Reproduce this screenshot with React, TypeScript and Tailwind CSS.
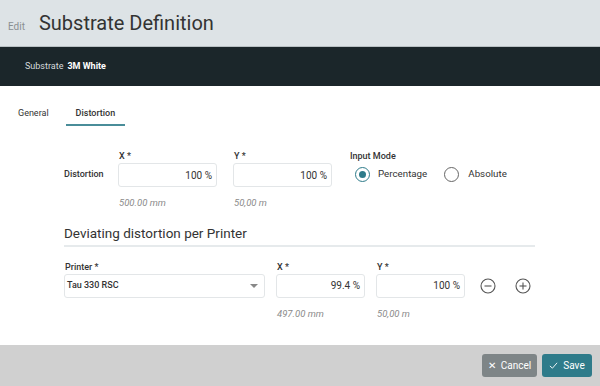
const Field = ({ label, value, hint, width }: { label: string; value: string; hint: string; width: string }) => (
  <div className={`flex flex-col ${width}`}>
    <span className="text-[9px] font-medium text-[#333] leading-[13px] h-[13px] ml-[1px]">{label}</span>
    <div className="h-[24px] border border-[#e3e6e8] rounded-[3px] bg-white flex items-center justify-end pr-[4px] text-[10px] text-[#333]">
      {value}
    </div>
    <span className="text-[9.5px] italic text-[#8a8a8a] mt-[11px] ml-[1px] leading-none">{hint}</span>
  </div>
);

const CircleIcon = ({ plus }: { plus?: boolean }) => (
  <svg width="16" height="16" viewBox="0 0 16 16" fill="none" stroke="#555" strokeWidth="1.1">
    <circle cx="8" cy="8" r="7" />
    <line x1="4.5" y1="8" x2="11.5" y2="8" />
    {plus && <line x1="8" y1="4.5" x2="8" y2="11.5" />}
  </svg>
);

export default function App() {
  return (
    <div className="w-[600px] h-[386px] flex flex-col bg-white overflow-hidden" style={{ fontFamily: "Roboto, 'Liberation Sans', sans-serif" }}>
      {/* Header */}
      <div className="h-[47px] bg-[#dde3e6] flex items-center border-b border-[#b8c0c3]">
        <span className="ml-[8px] mt-[6px] text-[10px] text-[#8a8f92]">Edit</span>
        <span className="ml-[14px] text-[20px] text-[#333]">Substrate Definition</span>
      </div>
      <div className="h-[39px] bg-[#1b262a] flex items-center pl-[25px] text-[9px]">
        <span className="text-[#d6dadc]">Substrate</span>
        <span className="ml-[4px] text-white font-bold">3M White</span>
      </div>

      {/* Tabs */}
      <div className="flex ml-[8px] mt-[20px] text-[9px] leading-[14px] text-[#333]">
        <div className="px-[10px] pb-[5px]">General</div>
        <div className="px-[10px] pb-[4px] ml-[7px] font-medium border-b-2 border-[#4a8d99]">Distortion</div>
      </div>

      {/* Distortion */}
      <div className="flex ml-[64px] mt-[24px]">
        <span className="text-[9px] leading-[13px] font-medium text-[#333] mt-[18px] w-[54px]">Distortion</span>
        <Field label="X *" value="100 %" hint="500.00 mm" width="w-[99px]" />
        <div className="w-[16px]" />
        <Field label="Y *" value="100 %" hint="50,00 m" width="w-[99px]" />
        <div className="flex flex-col ml-[18px]">
          <span className="text-[9px] text-[#333] font-medium leading-[13px] h-[13px]">Input Mode</span>
          <div className="flex items-center mt-[4px] text-[9.75px] text-[#333]">
            <span className="w-[15px] h-[15px] rounded-full border-[1.5px] border-[#2e7b8a] flex items-center justify-center ml-[5px]">
              <span className="w-[7px] h-[7px] rounded-full bg-[#2e7b8a]" />
            </span>
            <span className="ml-[8px]">Percentage</span>
            <span className="w-[15px] h-[15px] rounded-full border-[1.5px] border-[#666] ml-[17px]" />
            <span className="ml-[9px]">Absolute</span>
          </div>
        </div>
      </div>

      {/* Deviating */}
      <div className="ml-[64px] mr-[65px] mt-[15px] border-b-2 border-[#e6eaec] pb-[2px] text-[13.5px] leading-[20px] text-[#333]">
        Deviating distortion per Printer
      </div>
      <div className="flex ml-[64px] mt-[14px]">
        <div className="flex flex-col w-[201px]">
          <span className="text-[9px] text-[#333] font-medium leading-[13px] h-[13px] ml-[1px]">Printer *</span>
          <div className="h-[24px] border border-[#e3e6e8] rounded-[3px] flex items-center justify-between pl-[2px] pr-[6px] text-[9px] font-medium text-[#333]">
            Tau 330 RSC
            <span className="w-0 h-0 border-l-[4px] border-r-[4px] border-t-[4px] border-l-transparent border-r-transparent border-t-[#888]" />
          </div>
        </div>
        <div className="w-[11px]" />
        <Field label="X *" value="99.4 %" hint="497.00 mm" width="w-[89px]" />
        <div className="w-[11px]" />
        <Field label="Y *" value="100 %" hint="50,00 m" width="w-[89px]" />
        <div className="flex items-center gap-[19px] ml-[15px] h-[24px] mt-[13px]">
          <CircleIcon />
          <CircleIcon plus />
        </div>
      </div>

      {/* Footer */}
      <div className="mt-auto h-[41px] bg-[#d0d0d0] flex items-center justify-end pr-[8px] gap-[5px]">
        <button className="h-[23px] w-[55px] rounded-[3px] bg-[#7e8587] text-white text-[10px] flex items-center justify-center gap-[5px]">
          <span className="text-[10px] font-light">✕</span>Cancel
        </button>
        <button className="h-[23px] w-[50px] rounded-[3px] bg-[#2e7b8a] text-white text-[10px] flex items-center justify-center gap-[5px]">
          <svg width="9" height="9" viewBox="0 0 10 10" fill="none" stroke="white" strokeWidth="1">
            <path d="M1 5.5 L3.8 8 L9 2" />
          </svg>
          Save
        </button>
      </div>
    </div>
  );
}
